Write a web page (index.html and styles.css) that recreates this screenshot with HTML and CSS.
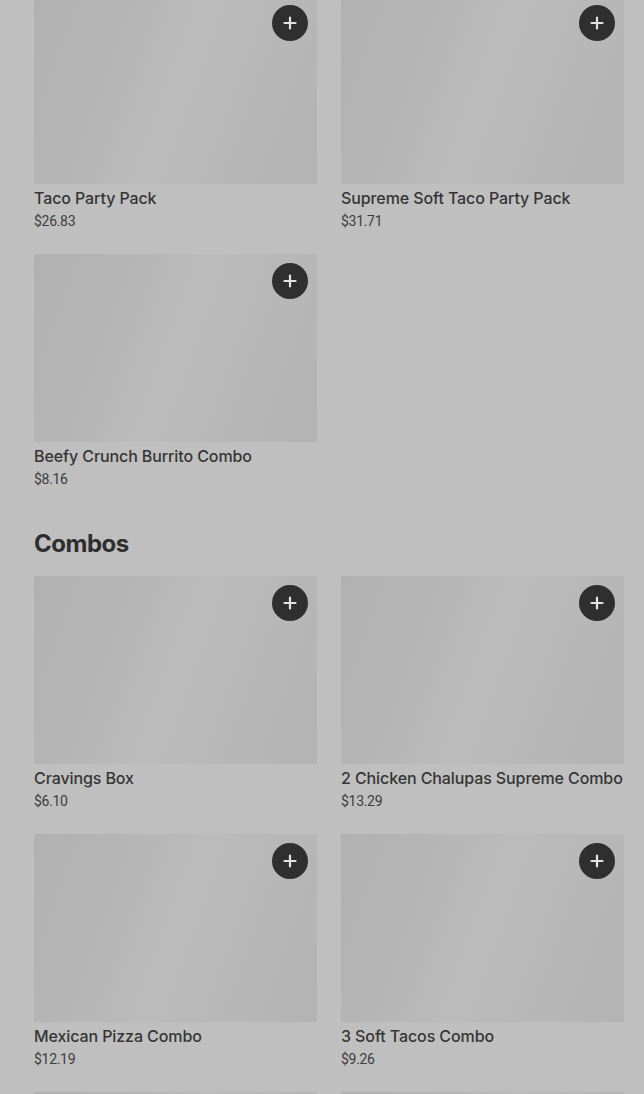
FILE: index.html
```html
<!DOCTYPE html>
<html lang="en">
<head>
    <meta charset="UTF-8">
    <meta name="viewport" content="width=device-width, initial-scale=1.0">
    <title>Menu</title>
    <link rel="stylesheet" href="styles.css">
</head>
<body>

    <div class="menu">

        <!-- Party packs (scrolled) -->
        <section class="menu-section first">
            <div class="item-grid">
                <div class="item">
                    <div class="item-img">
                        <button class="add-btn" aria-label="Add"><svg viewBox="0 0 14 14" width="14" height="14"><path d="M7 1.5v11M1.5 7h11" stroke="currentColor" stroke-width="2.2" stroke-linecap="round"/></svg></button>
                    </div>
                    <p class="item-name">Taco Party Pack</p>
                    <p class="item-price">$26.83</p>
                </div>
                <div class="item">
                    <div class="item-img">
                        <button class="add-btn" aria-label="Add"><svg viewBox="0 0 14 14" width="14" height="14"><path d="M7 1.5v11M1.5 7h11" stroke="currentColor" stroke-width="2.2" stroke-linecap="round"/></svg></button>
                    </div>
                    <p class="item-name">Supreme Soft Taco Party Pack</p>
                    <p class="item-price">$31.71</p>
                </div>
                <div class="item">
                    <div class="item-img">
                        <button class="add-btn" aria-label="Add"><svg viewBox="0 0 14 14" width="14" height="14"><path d="M7 1.5v11M1.5 7h11" stroke="currentColor" stroke-width="2.2" stroke-linecap="round"/></svg></button>
                    </div>
                    <p class="item-name">Beefy Crunch Burrito Combo</p>
                    <p class="item-price">$8.16</p>
                </div>
            </div>
        </section>

        <!-- Combos -->
        <section class="menu-section">
            <h2>Combos</h2>
            <div class="item-grid">
                <div class="item">
                    <div class="item-img">
                        <button class="add-btn" aria-label="Add"><svg viewBox="0 0 14 14" width="14" height="14"><path d="M7 1.5v11M1.5 7h11" stroke="currentColor" stroke-width="2.2" stroke-linecap="round"/></svg></button>
                    </div>
                    <p class="item-name">Cravings Box</p>
                    <p class="item-price">$6.10</p>
                </div>
                <div class="item">
                    <div class="item-img">
                        <button class="add-btn" aria-label="Add"><svg viewBox="0 0 14 14" width="14" height="14"><path d="M7 1.5v11M1.5 7h11" stroke="currentColor" stroke-width="2.2" stroke-linecap="round"/></svg></button>
                    </div>
                    <p class="item-name">2 Chicken Chalupas Supreme Combo</p>
                    <p class="item-price">$13.29</p>
                </div>
                <div class="item">
                    <div class="item-img">
                        <button class="add-btn" aria-label="Add"><svg viewBox="0 0 14 14" width="14" height="14"><path d="M7 1.5v11M1.5 7h11" stroke="currentColor" stroke-width="2.2" stroke-linecap="round"/></svg></button>
                    </div>
                    <p class="item-name">Mexican Pizza Combo</p>
                    <p class="item-price">$12.19</p>
                </div>
                <div class="item">
                    <div class="item-img">
                        <button class="add-btn" aria-label="Add"><svg viewBox="0 0 14 14" width="14" height="14"><path d="M7 1.5v11M1.5 7h11" stroke="currentColor" stroke-width="2.2" stroke-linecap="round"/></svg></button>
                    </div>
                    <p class="item-name">3 Soft Tacos Combo</p>
                    <p class="item-price">$9.26</p>
                </div>
                <div class="item">
                    <div class="item-img"></div>
                </div>
                <div class="item">
                    <div class="item-img"></div>
                </div>
            </div>
        </section>

    </div>

</body>
</html>
```

FILE: styles.css
```css
* {
    margin: 0;
    padding: 0;
    box-sizing: border-box;
}

body {
    font-family: 'Roboto', 'Liberation Sans', sans-serif;
    background-color: #bfbfbf;
    color: #2f2f2f;
    height: 1094px;
    overflow: hidden;
}

/* Menu list */
.menu {
    width: 590px;
    margin-left: 34px;
    margin-top: -4px;
}

.menu-section {
    margin-bottom: 40px;
}

.menu-section h2 {
    font-family: 'Inter', 'Liberation Sans', sans-serif;
    font-size: 24px;
    font-weight: 700;
    line-height: 32px;
    letter-spacing: -0.5px;
    color: #2e2e2e;
    margin-bottom: 16px;
}

.item-grid {
    display: grid;
    grid-template-columns: 1fr 1fr;
    gap: 24px;
}

.item-img {
    position: relative;
    height: 188px;
    background: linear-gradient(110deg, #b1b1b1 0%, #b6b6b6 30%, #bbbbbb 50%, #b8b8b8 70%, #b3b3b3 100%);
}

.add-btn {
    position: absolute;
    top: 9px;
    right: 9px;
    width: 36px;
    height: 36px;
    border-radius: 50%;
    border: none;
    background-color: #2f2f2f;
    color: #e2e2e2;
    display: flex;
    align-items: center;
    justify-content: center;
}

.item-name {
    margin-top: 3px;
    font-family: 'Inter', 'Liberation Sans', sans-serif;
    font-size: 16px;
    font-weight: 500;
    line-height: 22px;
    letter-spacing: -0.1px;
    color: #353535;
}

.item-price {
    margin-top: 3px;
    font-size: 14px;
    line-height: 18px;
    color: #3d3d3d;
    letter-spacing: -0.3px;
}
```
